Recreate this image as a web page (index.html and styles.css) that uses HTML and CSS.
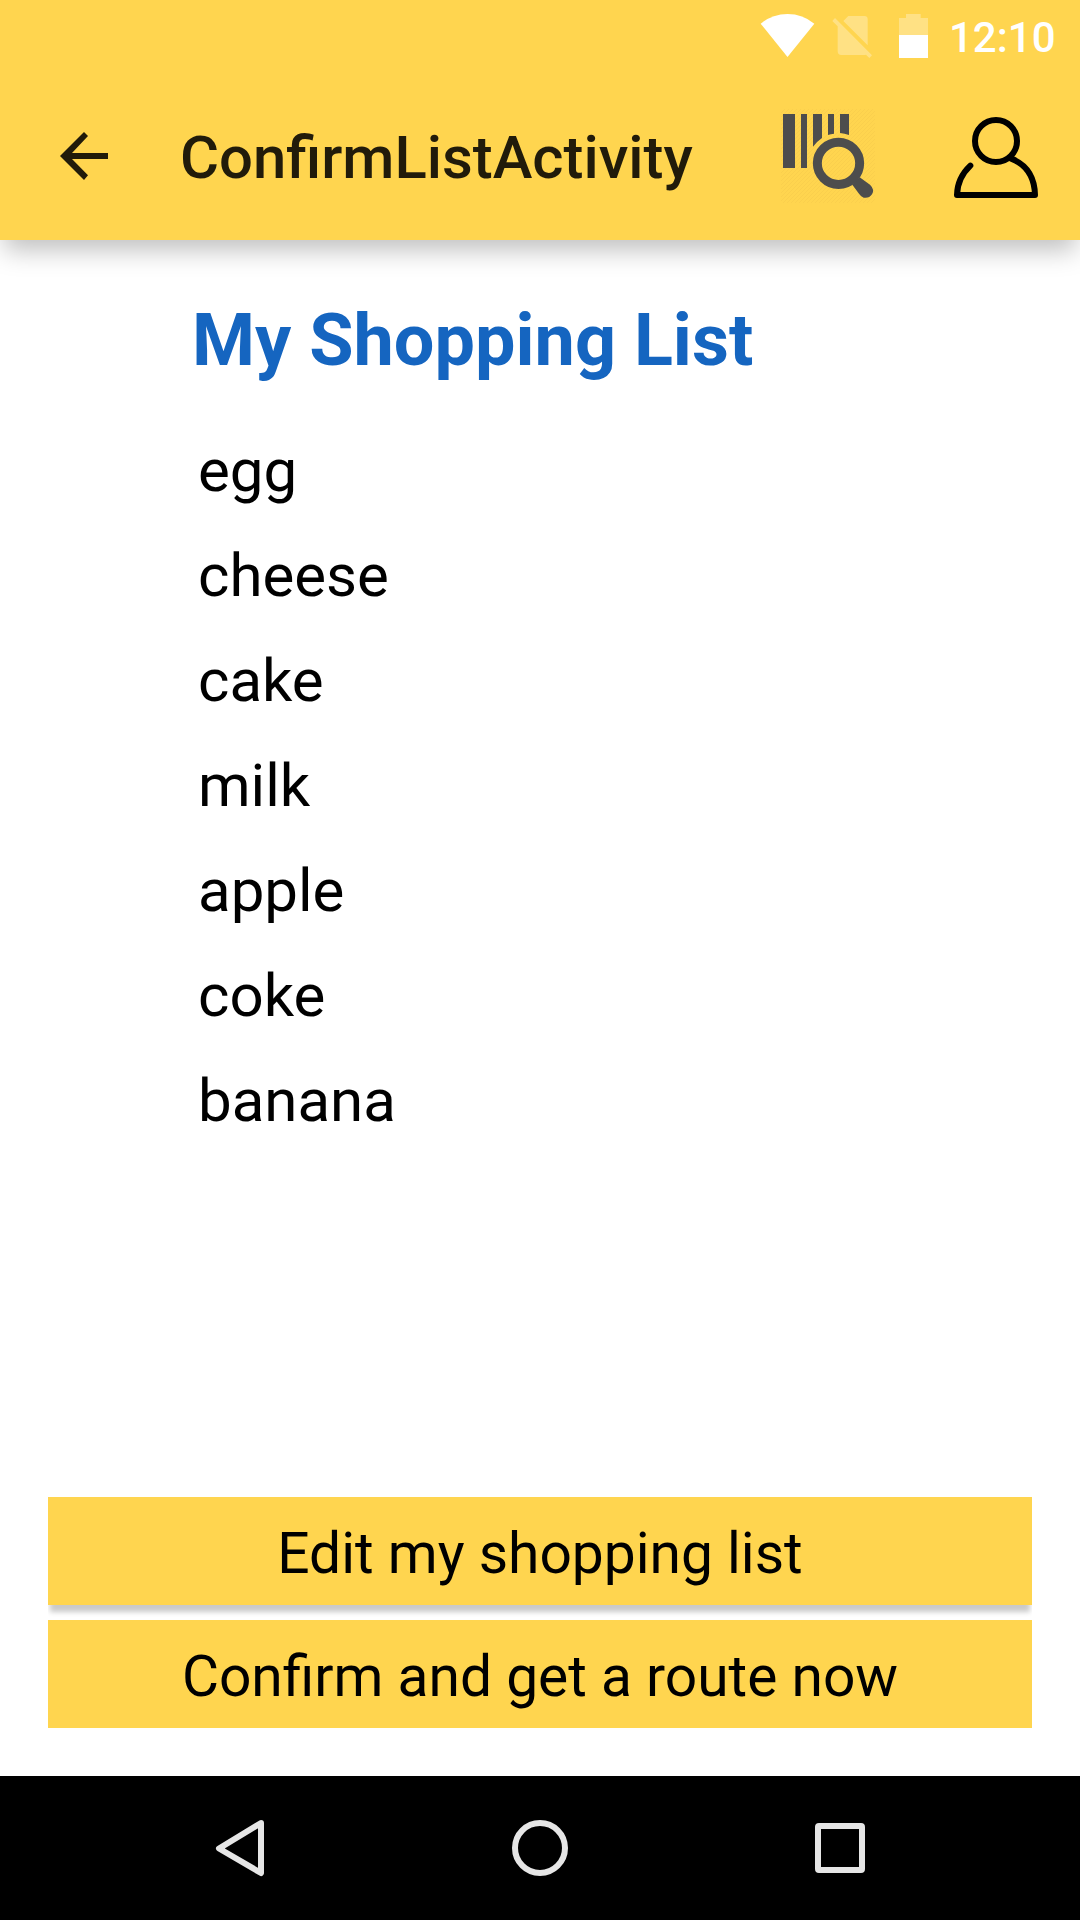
FILE: index.html
```html
<!DOCTYPE html>
<html lang="en">
<head>
<meta charset="utf-8">
<title>ConfirmListActivity</title>
<link rel="stylesheet" href="styles.css">
</head>
<body>
<div class="screen">
  <header class="top">
    <div class="status">
      <svg class="wifi" viewBox="60 39 165 135"><path fill="#fff" d="M62 71Q97 42 142.500 42T223 71L142.500 171Z"/></svg>
      <svg class="sim" viewBox="276 45 123 132"><g fill="#fff" fill-opacity=".3"><path d="M325 48H373Q383 48 383 58V136L310 63Z"/><path d="M285 54L396 166L388 174L378 164Q375 165 371 165H304Q293 165 293 154V79L277 63Z"/></g></svg>
      <svg class="battery" viewBox="477 42 87 132"><path fill="#fff" fill-opacity=".3" d="M498 42H542V54H564V105H477V54H498Z"/><path fill="#fff" d="M477 105H564V174H477Z"/></svg>
      <span class="clock">12:10</span>
    </div>
    <div class="appbar">
      <svg class="back" viewBox="180 126 144 144"><path fill="#211b0a" d="M324 189V207H216L264 256L252 270L180 198L252 126L264 138L216 189Z"/></svg>
      <h1 class="title">ConfirmListActivity</h1>
      <svg class="scan" viewBox="63 57 282 282">
        <defs><pattern id="hatch" width="12" height="12" patternUnits="userSpaceOnUse"><path d="M-3 3L3 -3M0 12L12 0M9 15L15 9" stroke="#f5c94a" stroke-width="1.500"/></pattern></defs>
        <rect x="63" y="57" width="282" height="282" fill="url(#hatch)"/>
        <g fill="#4d4d4d">
          <path d="M69 72H105V234H69ZM123 72H141V234H123ZM159 72H186V144Q170 155 159 170ZM204 72H222V131Q212 132 204 135ZM240 72H267V135Q254 130 240 129Z"/>
          <path d="M299 262L330 284Q345 299 336 313Q327 326 311 323Q303 320 297 311L277 284Z"/>
        </g>
        <circle cx="235.500" cy="220" r="63.500" fill="none" stroke="#4d4d4d" stroke-width="27"/>
      </svg>
      <svg class="person" viewBox="576 75 264 255"><g fill="none" stroke="#000" stroke-width="18" stroke-linecap="round" stroke-linejoin="round"><circle cx="708" cy="153" r="63"/><path d="M631 227Q592 264 591 315H825Q823 232 752 205"/></g></svg>
    </div>
  </header>
  <main class="content">
    <h2 class="heading">My Shopping List</h2>
    <ul class="items">
      <li>egg</li>
      <li>cheese</li>
      <li>cake</li>
      <li>milk</li>
      <li>apple</li>
      <li>coke</li>
      <li>banana</li>
    </ul>
    <div class="actions">
      <button class="action">Edit my shopping list</button>
      <button class="action">Confirm and get a route now</button>
    </div>
  </main>
  <nav class="navbar">
    <svg class="key" viewBox="0 0 60 60"><path d="M51 5L9 30.500L51 55Z"/></svg>
    <svg class="key" viewBox="0 0 60 60"><circle cx="30" cy="30" r="25"/></svg>
    <svg class="key" viewBox="0 0 60 60"><rect x="8" y="8" width="44" height="44" rx="1"/></svg>
  </nav>
</div>
</body>
</html>
```
FILE: styles.css
```css
* {
  box-sizing: border-box;
  margin: 0;
  padding: 0;
}

body {
  font-family: Roboto, sans-serif;
  background: #fff;
  color: #000;
}

svg {
  display: block;
  flex: none;
}

.screen {
  display: flex;
  flex-direction: column;
  width: 1080px;
  height: 1920px;
  overflow: hidden;
}

.top {
  height: 240px;
  background: #ffd54f;
  box-shadow: 0 14px 24px -4px rgba(0, 0, 0, 0.25);
}

.status {
  display: flex;
  justify-content: flex-end;
  align-items: flex-start;
  height: 72px;
  padding: 13px 24px 0 0;
}

.wifi {
  width: 55px;
  height: 45px;
}

.sim {
  width: 41px;
  height: 44px;
  margin: 2px 0 0 17px;
}

.battery {
  width: 29px;
  height: 44px;
  margin: 1px 0 0 26px;
}

.clock {
  width: 107px;
  margin-left: 21px;
  font-size: 42px;
  font-weight: 500;
  line-height: 49px;
  color: #fff;
  white-space: nowrap;
}

.appbar {
  display: flex;
  align-items: flex-start;
  height: 168px;
  padding-left: 60px;
}

.back {
  width: 48px;
  height: 48px;
  margin-top: 60px;
}

.title {
  width: 601px;
  margin-left: 72px;
  padding-top: 2px;
  font-size: 59.8px;
  font-weight: 500;
  line-height: 168px;
  color: #211b0a;
}

.scan {
  width: 94px;
  height: 94px;
  margin-top: 37px;
}

.person {
  width: 88px;
  height: 85px;
  margin: 43px 0 0 77px;
}

.content {
  flex: 1;
  display: flex;
  flex-direction: column;
  padding: 59px 48px 48px;
}

.heading {
  padding-left: 144px;
  font-size: 72px;
  font-weight: 700;
  line-height: 84px;
  color: #1565c0;
}

.items {
  margin-top: 35px;
  padding-left: 150px;
  list-style: none;
  font-size: 60px;
  line-height: 105px;
}

.actions {
  display: flex;
  flex-direction: column;
  gap: 15px;
  margin-top: auto;
  overflow: hidden;
}

.action {
  height: 108px;
  padding-top: 5px;
  border: 0;
  background: #ffd54f;
  box-shadow: 0 9px 5px -2px rgba(0, 0, 0, 0.21);
  font: 400 56.9px/103px Roboto, sans-serif;
  color: #000;
}

.navbar {
  display: flex;
  justify-content: center;
  align-items: center;
  gap: 240px;
  height: 144px;
  background: #000;
}

.key {
  width: 60px;
  height: 60px;
  fill: none;
  stroke: #e6e6e6;
  stroke-width: 6;
  stroke-linejoin: round;
}
```
